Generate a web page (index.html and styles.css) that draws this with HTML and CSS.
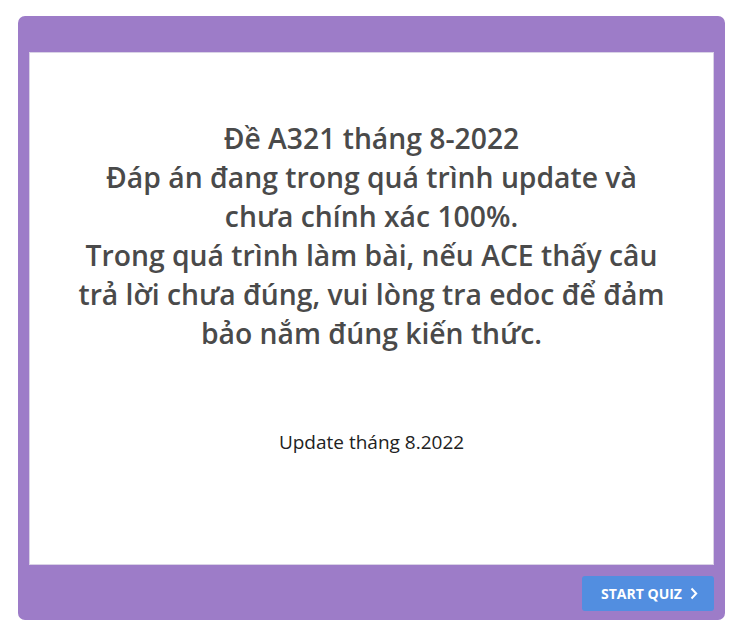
FILE: index.html
```html
<!DOCTYPE html>
<html lang="vi">
<head>
<meta charset="utf-8">
<link rel="stylesheet" href="styles.css">
</head>
<body>
<div class="frame">
  <div class="panel">
    <h1 class="title">Đề A321 tháng 8-2022<br>Đáp án đang trong quá trình update và chưa chính xác 100%.<br>Trong quá trình làm bài, nếu ACE thấy câu trả lời chưa đúng, vui lòng tra edoc để đảm bảo nắm đúng kiến thức.</h1>
    <p class="note">Update tháng 8.2022</p>
  </div>
  <div class="footer">
    <button class="start">START QUIZ
      <svg class="chev" width="8" height="13" viewBox="0 0 8 13"><path d="M1.5 1.5 L6.2 6.5 L1.5 11.5" fill="none" stroke="#fff" stroke-width="2"/></svg>
    </button>
  </div>
</div>
</body>
</html>
```
FILE: styles.css
```css
html, body { margin: 0; padding: 0; background: #fff; }
body { font-family: "Open Sans", "Noto Sans", sans-serif; }
.frame {
  margin: 16px 0 0 18px;
  width: 707px;
  height: 604px;
  box-sizing: border-box;
  background: #9d7cc8;
  border-radius: 7px;
  padding: 36px 11px 9px 11px;
  display: flex;
  flex-direction: column;
}
.panel {
  height: 513px;
  box-sizing: border-box;
  background: #fff;
  border: 1px solid #d9d2e6;
  display: flex;
  flex-direction: column;
  align-items: center;
  padding-top: 66px;
}
.title {
  margin: 0;
  width: 600px;
  text-align: center;
  font-size: 28.3px;
  font-weight: 600;
  line-height: 39px;
  color: #4a4a4a;
}
.note {
  margin: 76px 0 0;
  font-size: 19px;
  color: #222;
  line-height: 26px;
}
.footer {
  display: flex;
  justify-content: flex-end;
  padding-top: 11px;
}
.start {
  width: 132px;
  height: 35px;
  border: none;
  border-radius: 3px;
  background: #528ee0;
  color: #fff;
  font-family: "Open Sans", sans-serif;
  font-weight: 700;
  font-size: 14px;
  display: flex;
  align-items: center;
  justify-content: center;
  gap: 8px;
  padding: 0 0 0 3px;
}
.chev { display: block; }
```
